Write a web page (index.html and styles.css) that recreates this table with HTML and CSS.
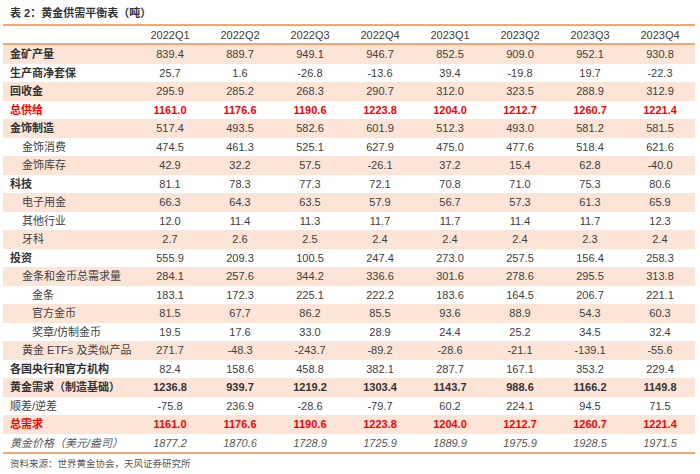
FILE: index.html
```html
<!DOCTYPE html>
<html lang="zh">
<head>
<meta charset="utf-8">
<title>黄金供需平衡表</title>
<link rel="stylesheet" href="styles.css">
</head>
<body>
<div class="title">表 2：黄金供需平衡表（吨）</div>
<table class="tbl">
  <colgroup><col class="c-label"><col><col><col><col><col><col><col><col></colgroup>
  <thead>
    <tr><th></th><th>2022Q1</th><th>2022Q2</th><th>2022Q3</th><th>2022Q4</th><th>2023Q1</th><th>2023Q2</th><th>2023Q3</th><th>2023Q4</th></tr>
  </thead>
  <tbody>
    <tr class="band b"><td class="l0">金矿产量</td><td>839.4</td><td>889.7</td><td>949.1</td><td>946.7</td><td>852.5</td><td>909.0</td><td>952.1</td><td>930.8</td></tr>
    <tr class="b"><td class="l0">生产商净套保</td><td>25.7</td><td>1.6</td><td>-26.8</td><td>-13.6</td><td>39.4</td><td>-19.8</td><td>19.7</td><td>-22.3</td></tr>
    <tr class="band b"><td class="l0">回收金</td><td>295.9</td><td>285.2</td><td>268.3</td><td>290.7</td><td>312.0</td><td>323.5</td><td>288.9</td><td>312.9</td></tr>
    <tr class="red"><td class="l0">总供给</td><td>1161.0</td><td>1176.6</td><td>1190.6</td><td>1223.8</td><td>1204.0</td><td>1212.7</td><td>1260.7</td><td>1221.4</td></tr>
    <tr class="band b"><td class="l0">金饰制造</td><td>517.4</td><td>493.5</td><td>582.6</td><td>601.9</td><td>512.3</td><td>493.0</td><td>581.2</td><td>581.5</td></tr>
    <tr><td class="l1">金饰消费</td><td>474.5</td><td>461.3</td><td>525.1</td><td>627.9</td><td>475.0</td><td>477.6</td><td>518.4</td><td>621.6</td></tr>
    <tr class="band"><td class="l1">金饰库存</td><td>42.9</td><td>32.2</td><td>57.5</td><td>-26.1</td><td>37.2</td><td>15.4</td><td>62.8</td><td>-40.0</td></tr>
    <tr class="b"><td class="l0">科技</td><td>81.1</td><td>78.3</td><td>77.3</td><td>72.1</td><td>70.8</td><td>71.0</td><td>75.3</td><td>80.6</td></tr>
    <tr class="band"><td class="l1">电子用金</td><td>66.3</td><td>64.3</td><td>63.5</td><td>57.9</td><td>56.7</td><td>57.3</td><td>61.3</td><td>65.9</td></tr>
    <tr><td class="l1">其他行业</td><td>12.0</td><td>11.4</td><td>11.3</td><td>11.7</td><td>11.7</td><td>11.4</td><td>11.7</td><td>12.3</td></tr>
    <tr class="band"><td class="l1">牙科</td><td>2.7</td><td>2.6</td><td>2.5</td><td>2.4</td><td>2.4</td><td>2.4</td><td>2.3</td><td>2.4</td></tr>
    <tr class="b"><td class="l0">投资</td><td>555.9</td><td>209.3</td><td>100.5</td><td>247.4</td><td>273.0</td><td>257.5</td><td>156.4</td><td>258.3</td></tr>
    <tr class="band"><td class="l1">金条和金币总需求量</td><td>284.1</td><td>257.6</td><td>344.2</td><td>336.6</td><td>301.6</td><td>278.6</td><td>295.5</td><td>313.8</td></tr>
    <tr><td class="l2">金条</td><td>183.1</td><td>172.3</td><td>225.1</td><td>222.2</td><td>183.6</td><td>164.5</td><td>206.7</td><td>221.1</td></tr>
    <tr class="band"><td class="l2">官方金币</td><td>81.5</td><td>67.7</td><td>86.2</td><td>85.5</td><td>93.6</td><td>88.9</td><td>54.3</td><td>60.3</td></tr>
    <tr><td class="l2">奖章/仿制金币</td><td>19.5</td><td>17.6</td><td>33.0</td><td>28.9</td><td>24.4</td><td>25.2</td><td>34.5</td><td>32.4</td></tr>
    <tr class="band"><td class="l1">黄金 ETFs 及类似产品</td><td>271.7</td><td>-48.3</td><td>-243.7</td><td>-89.2</td><td>-28.6</td><td>-21.1</td><td>-139.1</td><td>-55.6</td></tr>
    <tr class="b"><td class="l0">各国央行和官方机构</td><td>82.4</td><td>158.6</td><td>458.8</td><td>382.1</td><td>287.7</td><td>167.1</td><td>353.2</td><td>229.4</td></tr>
    <tr class="band b bn"><td class="l0">黄金需求（制造基础）</td><td>1236.8</td><td>939.7</td><td>1219.2</td><td>1303.4</td><td>1143.7</td><td>988.6</td><td>1166.2</td><td>1149.8</td></tr>
    <tr><td class="l0">顺差/逆差</td><td>-75.8</td><td>236.9</td><td>-28.6</td><td>-79.7</td><td>60.2</td><td>224.1</td><td>94.5</td><td>71.5</td></tr>
    <tr class="band red"><td class="l0">总需求</td><td>1161.0</td><td>1176.6</td><td>1190.6</td><td>1223.8</td><td>1204.0</td><td>1212.7</td><td>1260.7</td><td>1221.4</td></tr>
    <tr class="it"><td class="l0">黄金价格（美元/盎司）</td><td>1877.2</td><td>1870.6</td><td>1728.9</td><td>1725.9</td><td>1889.9</td><td>1975.9</td><td>1928.5</td><td>1971.5</td></tr>
  </tbody>
</table>
<div class="source">资料来源：世界黄金协会，天风证券研究所</div>
</body>
</html>
```

FILE: styles.css
```css
html, body {
  margin: 0;
  padding: 0;
  background: #ffffff;
}
body {
  font-family: "Liberation Sans", Arial, "Noto Sans CJK SC", sans-serif;
  color: #404040;
}
.title {
  height: 24px;
  line-height: 26px;
  padding-left: 10px;
  font-size: 11px;
  font-weight: bold;
  color: #333333;
}
.tbl {
  margin-left: 3px;
  width: 692px;
  border-collapse: collapse;
  table-layout: fixed;
  border-top: 2px solid #f4a86f;
  border-bottom: 2px solid #f4a86f;
  font-size: 11px;
}
.tbl col { width: 70px; }
.tbl col.c-label { width: 132px; }
.tbl th {
  height: 17px;
  padding: 0;
  font-weight: normal;
  text-align: center;
  color: #404040;
  border-bottom: 2px solid #f4a86f;
}
.tbl td {
  height: 18.5px;
  padding: 0;
  text-align: center;
  white-space: nowrap;
  line-height: 14px;
}
.tbl td.l0, .tbl td.l1, .tbl td.l2 { text-align: left; }
.tbl td.l0 { padding-left: 7px; }
.tbl td.l1 { padding-left: 19px; }
.tbl td.l2 { padding-left: 29px; }
.band { background: #fce4d6; }
.b td.l0 { font-weight: bold; color: #333333; }
.bn td { font-weight: bold; color: #333333; }
.red td { color: #ff0000; font-weight: bold; }
.it td { font-style: italic; color: #595959; }
.source {
  padding: 2px 0 0 10px;
  font-size: 9.5px;
  color: #595959;
}
```
